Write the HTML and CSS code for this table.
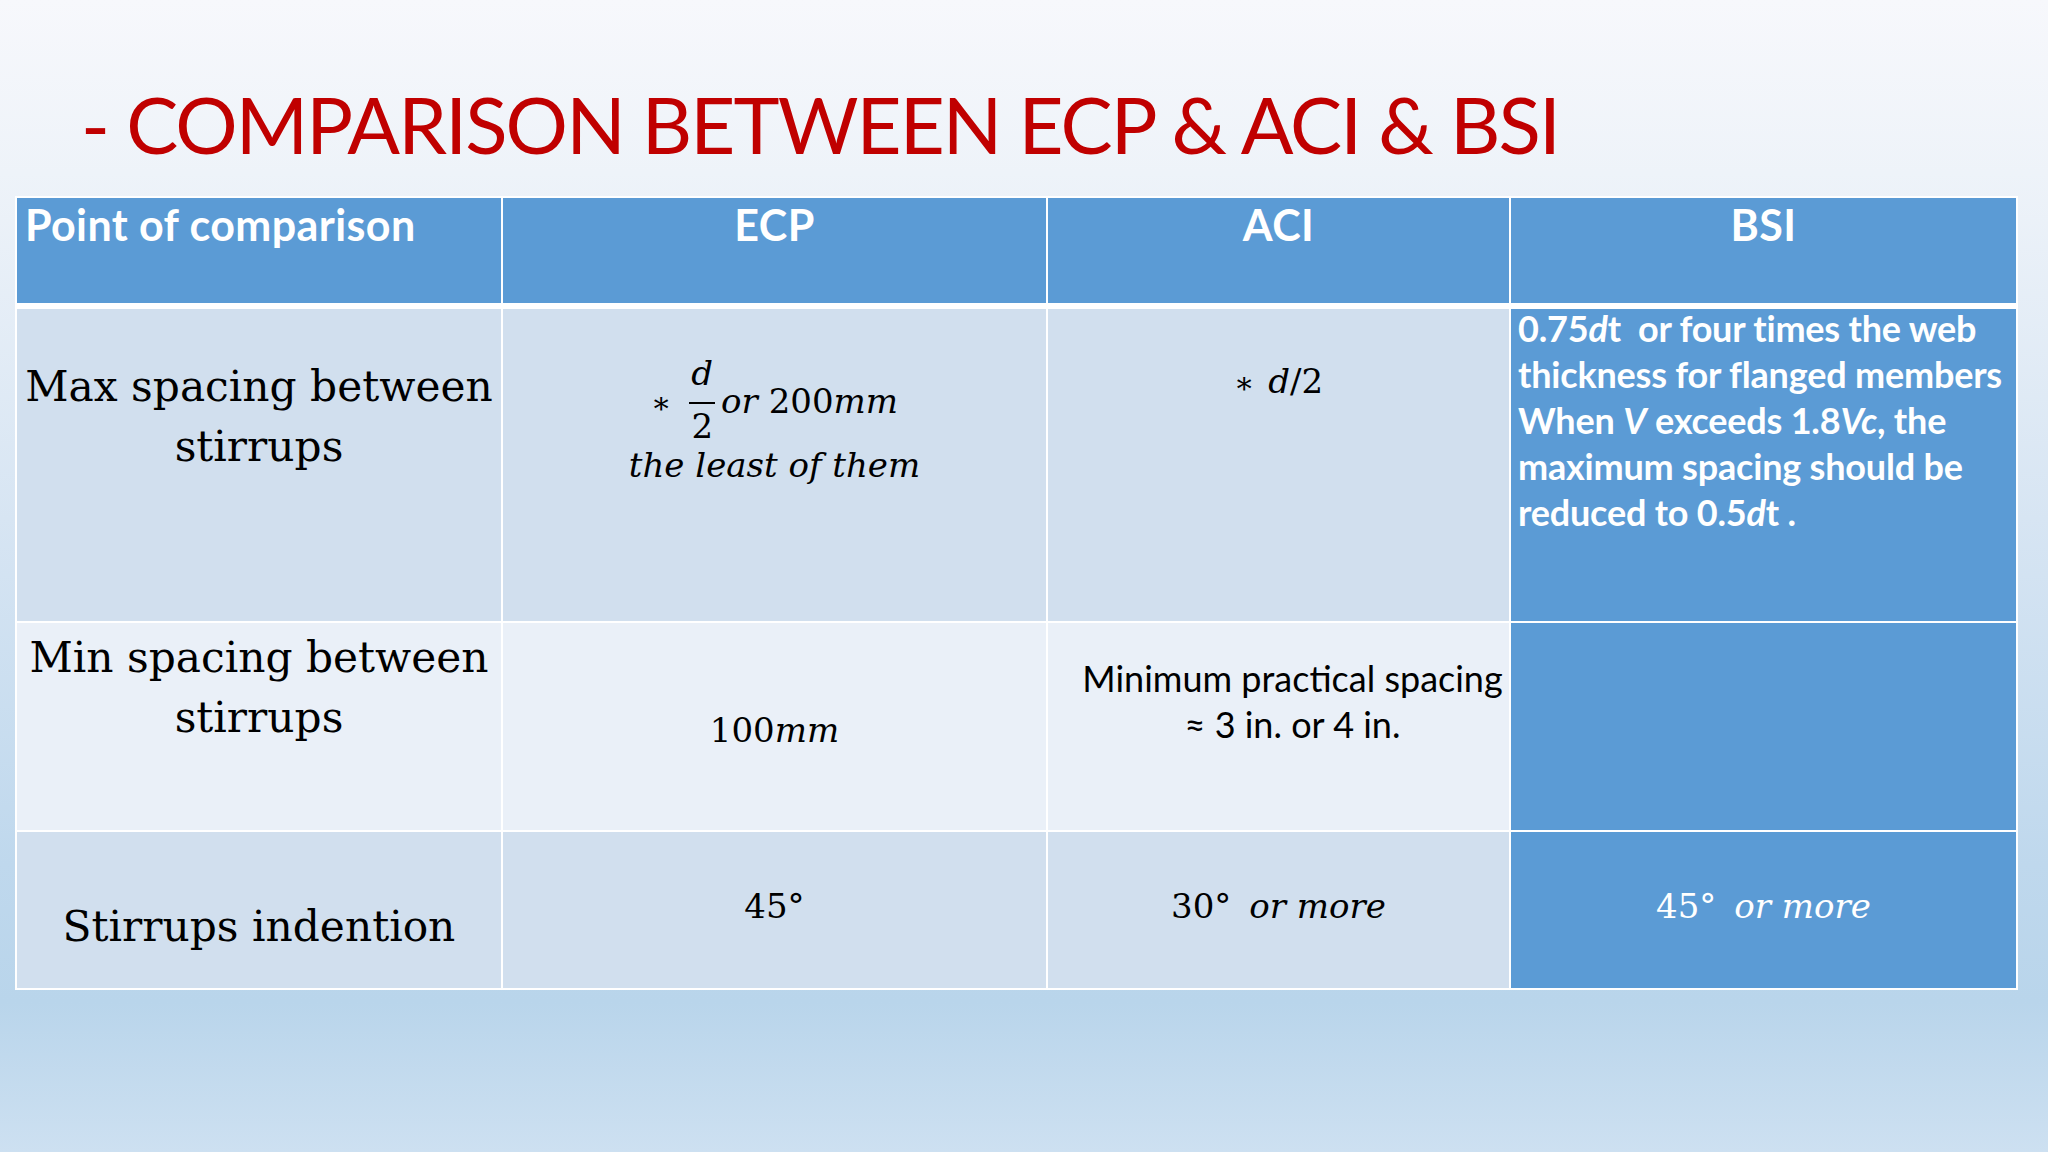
FILE: index.html
```html
<!DOCTYPE html>
<html>
<head>
<meta charset="utf-8">
<link rel="stylesheet" href="styles.css">
</head>
<body>
<div class="slide">
  <h1 class="title">- COMPARISON BETWEEN ECP &amp; ACI &amp; BSI</h1>
  <div class="table">
    <div class="cell head left">Point of comparison</div>
    <div class="cell head">ECP</div>
    <div class="cell head">ACI</div>
    <div class="cell head">BSI</div>

    <div class="cell r1 label p-r1">Max spacing between<br>stirrups</div>
    <div class="cell r1 math p-ecp1">
      <div class="mline"><span class="op">∗</span><span class="frac"><span class="num"><i>d</i></span><span class="den">2</span></span><i>or</i>&nbsp;200<i>mm</i></div>
      <div class="mline"><i>the least of them</i></div>
    </div>
    <div class="cell r1 math p-aci1"><div class="sline"><span class="op2">∗</span><i>d</i>/2</div></div>
    <div class="cell bsi bsi-text"><div class="bsi-inner">0.75<i>d</i>t &nbsp;or four times the web<br>thickness for flanged members<br>When <i>V</i> exceeds 1.8<i>Vc</i>, the<br>maximum spacing should be<br>reduced to 0.5<i>d</i>t .</div></div>

    <div class="cell r2 label p-r2">Min spacing between<br>stirrups</div>
    <div class="cell r2 math p-ecp2"><div class="sline">100<i>mm</i></div></div>
    <div class="cell r2 aci-text">Minimum practical spacing<br>≈ 3 in. or 4 in.</div>
    <div class="cell bsi"></div>

    <div class="cell r3 label p-r3">Stirrups indention</div>
    <div class="cell r3 math p-r3m"><div class="sline">45°</div></div>
    <div class="cell r3 math p-r3m"><div class="sline">30°<span class="gap"></span><i>or more</i></div></div>
    <div class="cell bsi math white p-r3m"><div class="sline">45°<span class="gap"></span><i>or more</i></div></div>
  </div>
</div>
</body>
</html>
```

FILE: styles.css
```css
html, body {
  margin: 0;
  padding: 0;
}
body {
  width: 2048px;
  height: 1152px;
  overflow: hidden;
  background: linear-gradient(180deg, #f7f8fc 0%, #eef3f9 15%, #d7e5f3 45%, #bfd8ed 75%, #b9d5eb 87%, #cde0f1 100%);
}
.slide {
  width: 2048px;
  height: 1152px;
  padding-top: 77px;
  box-sizing: border-box;
}
.title {
  margin: 0 0 25px 81px;
  font-family: "Lato", sans-serif;
  font-weight: 400;
  font-size: 78px;
  line-height: 94px;
  letter-spacing: -1.9px;
  color: #c00000;
  white-space: nowrap;
}
.table {
  margin-left: 15px;
  width: 2003px;
  box-sizing: border-box;
  display: grid;
  grid-template-columns: 484px 543px 461px 505px;
  grid-template-rows: 109px 312px 207px 156px;
  gap: 2px;
  padding: 2px;
  background: #ffffff;
}
.cell {
  box-sizing: border-box;
  text-align: center;
}
.head {
  background: #5b9bd5;
  margin-bottom: 4px;
  color: #ffffff;
  font-family: "Lato", sans-serif;
  font-weight: 700;
  font-size: 43px;
  letter-spacing: 0.4px;
  line-height: 50px;
  padding-top: 2px;
  white-space: nowrap;
}
.head.left {
  text-align: left;
  padding-left: 8px;
}
.r1, .r3 { background: #d1dfee; }
.r2 { background: #eaf0f8; }
.bsi { background: #5b9bd5; }

.label {
  font-family: "DejaVu Serif", serif;
  font-size: 42.3px;
  line-height: 60px;
  color: #000;
  white-space: nowrap;
}
.p-r1 { padding-top: 48px; }
.p-r2 { padding-top: 5px; }
.p-r3 { padding-top: 65px; }

.math {
  font-family: "DejaVu Serif", serif;
  font-size: 34px;
  color: #000;
  white-space: nowrap;
}
.math i { font-style: italic; }
.mline { line-height: 63px; }
.mline.wide { letter-spacing: 0.3px; }
.sline { line-height: 40px; }
.p-ecp1 { padding-top: 61px; }
.p-aci1 { padding-top: 52px; }
.p-ecp2 { padding-top: 87px; }
.p-r3m { padding-top: 54px; }
.white { color: #ffffff; }

.op {
  font-size: 30px;
  margin-right: 18px;
}
.op2 {
  font-size: 30px;
  margin-right: 14px;
}
.frac {
  display: inline-flex;
  flex-direction: column;
  align-items: center;
  vertical-align: 28px;
  margin: -40px 6px -40px 0;
}
.num {
  line-height: 34px;
  padding: 0 2px 12px;
  border-bottom: 2px solid #000;
}
.den {
  line-height: 34px;
  margin-top: 5px;
}
.gap {
  display: inline-block;
  width: 18px;
}

.bsi-text {
  text-align: left;
  padding: 0 0 0 7px;
  color: #ffffff;
  font-family: "Lato", sans-serif;
  font-weight: 700;
  font-size: 36px;
  letter-spacing: -0.2px;
  line-height: 46px;
  white-space: nowrap;
}
.bsi-inner {
  margin-top: -4px;
}
.aci-text {
  padding: 32px 0 0 28px;
  font-family: "Lato", sans-serif;
  font-weight: 400;
  font-size: 36px;
  line-height: 46px;
  color: #000;
  white-space: nowrap;
}
```
